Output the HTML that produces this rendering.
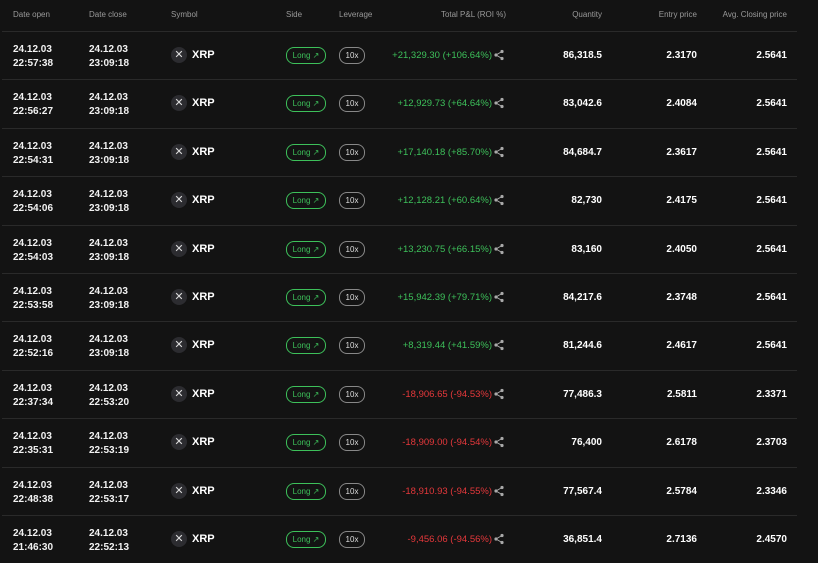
<!DOCTYPE html><html><head><style>
html,body{margin:0;background:#131313;width:818px;height:554px;overflow:hidden;font-family:"Liberation Sans",sans-serif;color:#fff}
.h{position:absolute;top:0;height:31px;left:0;width:818px;font-size:8px;color:#9a9a9a}
.h span,.r span,.r div{position:absolute}
.r{position:absolute;left:0;width:818px;height:48px}
.r:before{content:"";position:absolute;left:2px;right:21px;top:0;border-top:1px solid #2a2a2a}
.d{font-size:10px;font-weight:bold;line-height:14px;top:12px;color:#f2f2f2}
.ic{left:171px;top:16px;width:16px;height:16px;border-radius:50%;background:#2c2c30;color:#ddd;font-size:11px;text-align:center;line-height:16px}
.sym{left:192px;top:18px;font-size:11px;font-weight:bold}
.pl{left:286px;top:16px;width:38px;height:15px;border:1px solid #3dc05a;border-radius:8px;color:#3dc05a;font-size:8px;text-align:center;line-height:15px}
.lv{left:339px;top:16px;width:24px;height:15px;border:1px solid #888;border-radius:8px;color:#ddd;font-size:8px;text-align:center;line-height:15px}
.p{right:326px;top:19px;font-size:9.5px;color:#3dc05a}
.p.n{color:#e5383b}
.sh{left:494px;top:18px}
.q{right:216px;top:19px;font-size:10px;font-weight:bold}
.e{right:121px;top:19px;font-size:10px;font-weight:bold}
.a{right:31px;top:19px;font-size:10px;font-weight:bold}
</style></head><body>
<div class="h"><span style="left:13px;top:10px">Date open</span><span style="left:89px;top:10px">Date close</span><span style="left:171px;top:10px">Symbol</span><span style="left:286px;top:10px">Side</span><span style="left:339px;top:10px">Leverage</span><span style="right:312px;top:10px">Total P&amp;L (ROI %)</span><span style="right:216px;top:10px">Quantity</span><span style="right:121px;top:10px">Entry price</span><span style="right:31px;top:10px">Avg. Closing price</span></div>

<div class="r" style="top:31px"><div class="d" style="left:13px">24.12.03<br>22:57:38</div><div class="d" style="left:89px">24.12.03<br>23:09:18</div><div class="ic">✕</div><div class="sym">XRP</div><div class="pl">Long ↗</div><div class="lv">10x</div><div class="p">+21,329.30 (+106.64%)</div><svg class="sh" style="position:absolute" width="10" height="12" viewBox="0 0 10 12"><circle cx="8" cy="2.5" r="1.6" fill="#aaa"/><circle cx="2" cy="6" r="1.6" fill="#aaa"/><circle cx="8" cy="9.5" r="1.6" fill="#aaa"/><path d="M8 2.5L2 6L8 9.5" stroke="#aaa" fill="none"/></svg><div class="q">86,318.5</div><div class="e">2.3170</div><div class="a">2.5641</div></div>

<div class="r" style="top:79.4px"><div class="d" style="left:13px">24.12.03<br>22:56:27</div><div class="d" style="left:89px">24.12.03<br>23:09:18</div><div class="ic">✕</div><div class="sym">XRP</div><div class="pl">Long ↗</div><div class="lv">10x</div><div class="p">+12,929.73 (+64.64%)</div><svg class="sh" style="position:absolute" width="10" height="12" viewBox="0 0 10 12"><circle cx="8" cy="2.5" r="1.6" fill="#aaa"/><circle cx="2" cy="6" r="1.6" fill="#aaa"/><circle cx="8" cy="9.5" r="1.6" fill="#aaa"/><path d="M8 2.5L2 6L8 9.5" stroke="#aaa" fill="none"/></svg><div class="q">83,042.6</div><div class="e">2.4084</div><div class="a">2.5641</div></div>

<div class="r" style="top:127.8px"><div class="d" style="left:13px">24.12.03<br>22:54:31</div><div class="d" style="left:89px">24.12.03<br>23:09:18</div><div class="ic">✕</div><div class="sym">XRP</div><div class="pl">Long ↗</div><div class="lv">10x</div><div class="p">+17,140.18 (+85.70%)</div><svg class="sh" style="position:absolute" width="10" height="12" viewBox="0 0 10 12"><circle cx="8" cy="2.5" r="1.6" fill="#aaa"/><circle cx="2" cy="6" r="1.6" fill="#aaa"/><circle cx="8" cy="9.5" r="1.6" fill="#aaa"/><path d="M8 2.5L2 6L8 9.5" stroke="#aaa" fill="none"/></svg><div class="q">84,684.7</div><div class="e">2.3617</div><div class="a">2.5641</div></div>

<div class="r" style="top:176.2px"><div class="d" style="left:13px">24.12.03<br>22:54:06</div><div class="d" style="left:89px">24.12.03<br>23:09:18</div><div class="ic">✕</div><div class="sym">XRP</div><div class="pl">Long ↗</div><div class="lv">10x</div><div class="p">+12,128.21 (+60.64%)</div><svg class="sh" style="position:absolute" width="10" height="12" viewBox="0 0 10 12"><circle cx="8" cy="2.5" r="1.6" fill="#aaa"/><circle cx="2" cy="6" r="1.6" fill="#aaa"/><circle cx="8" cy="9.5" r="1.6" fill="#aaa"/><path d="M8 2.5L2 6L8 9.5" stroke="#aaa" fill="none"/></svg><div class="q">82,730</div><div class="e">2.4175</div><div class="a">2.5641</div></div>

<div class="r" style="top:224.6px"><div class="d" style="left:13px">24.12.03<br>22:54:03</div><div class="d" style="left:89px">24.12.03<br>23:09:18</div><div class="ic">✕</div><div class="sym">XRP</div><div class="pl">Long ↗</div><div class="lv">10x</div><div class="p">+13,230.75 (+66.15%)</div><svg class="sh" style="position:absolute" width="10" height="12" viewBox="0 0 10 12"><circle cx="8" cy="2.5" r="1.6" fill="#aaa"/><circle cx="2" cy="6" r="1.6" fill="#aaa"/><circle cx="8" cy="9.5" r="1.6" fill="#aaa"/><path d="M8 2.5L2 6L8 9.5" stroke="#aaa" fill="none"/></svg><div class="q">83,160</div><div class="e">2.4050</div><div class="a">2.5641</div></div>

<div class="r" style="top:273px"><div class="d" style="left:13px">24.12.03<br>22:53:58</div><div class="d" style="left:89px">24.12.03<br>23:09:18</div><div class="ic">✕</div><div class="sym">XRP</div><div class="pl">Long ↗</div><div class="lv">10x</div><div class="p">+15,942.39 (+79.71%)</div><svg class="sh" style="position:absolute" width="10" height="12" viewBox="0 0 10 12"><circle cx="8" cy="2.5" r="1.6" fill="#aaa"/><circle cx="2" cy="6" r="1.6" fill="#aaa"/><circle cx="8" cy="9.5" r="1.6" fill="#aaa"/><path d="M8 2.5L2 6L8 9.5" stroke="#aaa" fill="none"/></svg><div class="q">84,217.6</div><div class="e">2.3748</div><div class="a">2.5641</div></div>

<div class="r" style="top:321.4px"><div class="d" style="left:13px">24.12.03<br>22:52:16</div><div class="d" style="left:89px">24.12.03<br>23:09:18</div><div class="ic">✕</div><div class="sym">XRP</div><div class="pl">Long ↗</div><div class="lv">10x</div><div class="p">+8,319.44 (+41.59%)</div><svg class="sh" style="position:absolute" width="10" height="12" viewBox="0 0 10 12"><circle cx="8" cy="2.5" r="1.6" fill="#aaa"/><circle cx="2" cy="6" r="1.6" fill="#aaa"/><circle cx="8" cy="9.5" r="1.6" fill="#aaa"/><path d="M8 2.5L2 6L8 9.5" stroke="#aaa" fill="none"/></svg><div class="q">81,244.6</div><div class="e">2.4617</div><div class="a">2.5641</div></div>

<div class="r" style="top:369.8px"><div class="d" style="left:13px">24.12.03<br>22:37:34</div><div class="d" style="left:89px">24.12.03<br>22:53:20</div><div class="ic">✕</div><div class="sym">XRP</div><div class="pl">Long ↗</div><div class="lv">10x</div><div class="p n">-18,906.65 (-94.53%)</div><svg class="sh" style="position:absolute" width="10" height="12" viewBox="0 0 10 12"><circle cx="8" cy="2.5" r="1.6" fill="#aaa"/><circle cx="2" cy="6" r="1.6" fill="#aaa"/><circle cx="8" cy="9.5" r="1.6" fill="#aaa"/><path d="M8 2.5L2 6L8 9.5" stroke="#aaa" fill="none"/></svg><div class="q">77,486.3</div><div class="e">2.5811</div><div class="a">2.3371</div></div>

<div class="r" style="top:418.2px"><div class="d" style="left:13px">24.12.03<br>22:35:31</div><div class="d" style="left:89px">24.12.03<br>22:53:19</div><div class="ic">✕</div><div class="sym">XRP</div><div class="pl">Long ↗</div><div class="lv">10x</div><div class="p n">-18,909.00 (-94.54%)</div><svg class="sh" style="position:absolute" width="10" height="12" viewBox="0 0 10 12"><circle cx="8" cy="2.5" r="1.6" fill="#aaa"/><circle cx="2" cy="6" r="1.6" fill="#aaa"/><circle cx="8" cy="9.5" r="1.6" fill="#aaa"/><path d="M8 2.5L2 6L8 9.5" stroke="#aaa" fill="none"/></svg><div class="q">76,400</div><div class="e">2.6178</div><div class="a">2.3703</div></div>

<div class="r" style="top:466.6px"><div class="d" style="left:13px">24.12.03<br>22:48:38</div><div class="d" style="left:89px">24.12.03<br>22:53:17</div><div class="ic">✕</div><div class="sym">XRP</div><div class="pl">Long ↗</div><div class="lv">10x</div><div class="p n">-18,910.93 (-94.55%)</div><svg class="sh" style="position:absolute" width="10" height="12" viewBox="0 0 10 12"><circle cx="8" cy="2.5" r="1.6" fill="#aaa"/><circle cx="2" cy="6" r="1.6" fill="#aaa"/><circle cx="8" cy="9.5" r="1.6" fill="#aaa"/><path d="M8 2.5L2 6L8 9.5" stroke="#aaa" fill="none"/></svg><div class="q">77,567.4</div><div class="e">2.5784</div><div class="a">2.3346</div></div>

<div class="r" style="top:515px"><div class="d" style="left:13px">24.12.03<br>21:46:30</div><div class="d" style="left:89px">24.12.03<br>22:52:13</div><div class="ic">✕</div><div class="sym">XRP</div><div class="pl">Long ↗</div><div class="lv">10x</div><div class="p n">-9,456.06 (-94.56%)</div><svg class="sh" style="position:absolute" width="10" height="12" viewBox="0 0 10 12"><circle cx="8" cy="2.5" r="1.6" fill="#aaa"/><circle cx="2" cy="6" r="1.6" fill="#aaa"/><circle cx="8" cy="9.5" r="1.6" fill="#aaa"/><path d="M8 2.5L2 6L8 9.5" stroke="#aaa" fill="none"/></svg><div class="q">36,851.4</div><div class="e">2.7136</div><div class="a">2.4570</div></div>
</body></html>
